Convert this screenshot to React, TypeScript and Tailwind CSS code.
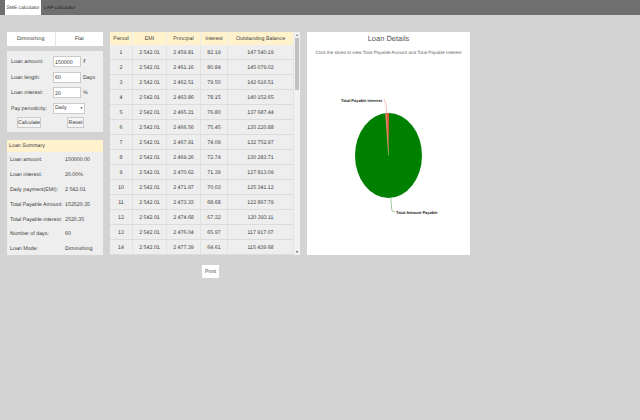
const FONT = "font-['Liberation_Sans',Arial,sans-serif] [text-rendering:geometricPrecision]";

const rows = [
  ['1', '2 542.01', '2 459.81', '82.19', '147 540.19'],
  ['2', '2 542.01', '2 461.16', '80.84', '145 079.02'],
  ['3', '2 542.01', '2 462.51', '79.50', '142 616.51'],
  ['4', '2 542.01', '2 463.86', '78.15', '140 152.65'],
  ['5', '2 542.01', '2 465.21', '76.80', '137 687.44'],
  ['6', '2 542.01', '2 466.56', '75.45', '135 220.88'],
  ['7', '2 542.01', '2 467.91', '74.09', '132 752.97'],
  ['8', '2 542.01', '2 469.26', '72.74', '130 283.71'],
  ['9', '2 542.01', '2 470.62', '71.39', '127 813.09'],
  ['10', '2 542.01', '2 471.97', '70.03', '125 341.12'],
  ['11', '2 542.01', '2 473.33', '68.68', '122 867.79'],
  ['12', '2 542.01', '2 474.68', '67.32', '120 393.11'],
  ['13', '2 542.01', '2 476.04', '65.97', '117 917.07'],
  ['14', '2 542.01', '2 477.39', '64.61', '115 439.68'],
];

const summary = [
  ['Loan amount:', '150000.00'],
  ['Loan interest:', '20.00%'],
  ['Daily payment(EMI):', '2 542.01'],
  ['Total Payable Amount:', '152520.35'],
  ['Total Payable interest:', '2520.35'],
  ['Number of days:', '60'],
  ['Loan Mode:', 'Diminishing'],
];

const colWidths = ['w-[23px]', 'w-[34px]', 'w-[34px]', 'w-[27px]', 'w-[66px]'];

function Field({ label, value, unit }: { label: string; value: string; unit: string }) {
  return (
    <div className="flex items-center h-[11px] mb-[4.5px] pt-[3px]">
      <span className="w-[42px]">{label}</span>
      <div className="w-[28px] h-[11px] -mt-[3px] bg-white border border-[#ccc] pl-[1px] pt-[1.5px] leading-[9px] text-[#333]">{value}</div>
      <span className="ml-[2px]">{unit}</span>
    </div>
  );
}

function PieChart() {
  return (
    <svg width="163" height="223" viewBox="0 0 163 223" className="block">
      <ellipse cx="81.5" cy="123.5" rx="33.5" ry="42.5" fill="#008000" />
      <path d="M81.5 123.5 L78.2 81.4 L82 81 Z" fill="#e8553a" />
      <path d="M81.5 123.5 L79 81.4" stroke="#b9c9a0" strokeWidth="0.6" />
      <path d="M79.7 81 L79 72 L77 67" fill="none" stroke="#f4a595" strokeWidth="0.7" />
      <path d="M83.7 166 L85 179 L88 180" fill="none" stroke="#7fbf7f" strokeWidth="0.8" />
    </svg>
  );
}

export default function App() {
  return (
    <div className={`${FONT} w-[640px] h-[420px] bg-[#d3d3d3] text-[5.3px] text-[#3c3c3c] overflow-hidden`}>
      <div className="flex h-[15px] bg-[#6f6f6f] pl-[5px] text-[4.9px]">
        <div className="bg-white w-[36px] flex items-center justify-center h-[15px] pt-[2px] whitespace-nowrap text-[#333]">SME calculator</div>
        <div className="pl-[3px] flex items-center h-[15px] pt-[2px] whitespace-nowrap text-[#1c1c1c]">LAP calculator</div>
      </div>

      <div className="flex items-start pl-[7px] pt-[17px] gap-[7px]">
        <div className="w-[96px]">
          <div className="flex h-[14px] bg-white">
            <div className="flex-1 flex items-center justify-center pt-[2px] border-r border-[#e5e5e5]">Diminishing</div>
            <div className="flex-1 flex items-center justify-center pt-[2px]">Flat</div>
          </div>
          <div className="mt-[5px] h-[81px] bg-[#eeeeee] pt-[5px] pl-[4px]">
            <Field label="Loan amount:" value="150000" unit="₹" />
            <Field label="Loan length:" value="60" unit="Days" />
            <Field label="Loan interest:" value="20" unit="%" />
            <div className="flex items-center h-[11px]">
              <span className="w-[42px] pt-[3px]">Pay periodicity:</span>
              <div className="w-[32px] h-[11px] bg-white border border-[#ccc] flex items-center justify-between px-[1px]">
                <span className="pt-[2px]">Daily</span>
                <span className="text-[3px] text-black">▼</span>
              </div>
            </div>
            <div className="flex mt-[3.5px] pl-[6px] gap-[26px]">
              <div className="w-[24px] h-[11px] flex items-center justify-center pt-[2px] bg-[#f4f4f4] border border-[#ccc]">Calculate</div>
              <div className="w-[17px] h-[11px] flex items-center justify-center pt-[2px] bg-[#f4f4f4] border border-[#ccc]">Reset</div>
            </div>
          </div>
          <div className="mt-[8px] h-[115px] bg-[#eeeeee]">
            <div className="h-[12px] bg-[#fff2cc] flex items-center pl-[2px] pt-[2px]">Loan Summary</div>
            {summary.map(([k, v]) => (
              <div key={k} className="flex items-center h-[14.9px] pl-[3px] pt-[3px]">
                <span className="w-[55px] shrink-0 whitespace-nowrap">{k}</span>
                <span className="whitespace-nowrap">{v}</span>
              </div>
            ))}
          </div>
        </div>

        <div className="flex w-[190px] h-[223px] overflow-hidden">
          <div className="w-[184px]">
            <div className="flex h-[13px] bg-[#fff2cc]">
              {['Period', 'EMI', 'Principal', 'Interest', 'Outstanding Balance'].map((h, i) => (
                <div key={h} className={`${colWidths[i]} flex items-center justify-center pt-[3px] border-r border-[#eee] whitespace-nowrap`}>{h}</div>
              ))}
            </div>
            {rows.map((r) => (
              <div key={r[0]} className="flex h-[15px] bg-[#eeeeee] border-b border-[#dcdcdc]">
                {r.map((c, i) => (
                  <div key={i} className={`${colWidths[i]} flex items-center justify-center pt-[3px] border-r border-[#e2e2e2] whitespace-nowrap`}>{c}</div>
                ))}
              </div>
            ))}
          </div>
          <div className="w-[6px] bg-[#f1f1f1] flex flex-col items-center relative">
            <span className="text-[3px] text-[#555] leading-[6px]">▲</span>
            <div className="w-[4px] h-[52px] bg-[#c1c1c1]" />
            <span className="absolute bottom-0 text-[3px] text-black leading-[6px]">▼</span>
          </div>
        </div>

        <div className="w-[163px] h-[223px] bg-white relative">
          <div className="text-center text-[7.5px] text-[#555] mt-[1px] leading-[12px]">Loan Details</div>
          <div className="text-center text-[4.6px] text-[#666] mt-[4px] leading-[7px] whitespace-nowrap">
            Click the slices to view Total Payable Amount and Total Payable Interest
          </div>
          <div className="absolute inset-0"><PieChart /></div>
          <span className="absolute left-[34px] top-[66px] text-[4px] font-bold text-[#222] whitespace-nowrap">Total Payable Interest</span>
          <span className="absolute left-[89px] top-[178px] text-[4px] font-bold text-[#222] whitespace-nowrap">Total Amount Payable</span>
        </div>
      </div>

      <div className="flex justify-center mt-[10px] w-[421px]">
        <div className="w-[17px] h-[13px] bg-white flex items-center justify-center pt-[2px]">Print</div>
      </div>
    </div>
  );
}
